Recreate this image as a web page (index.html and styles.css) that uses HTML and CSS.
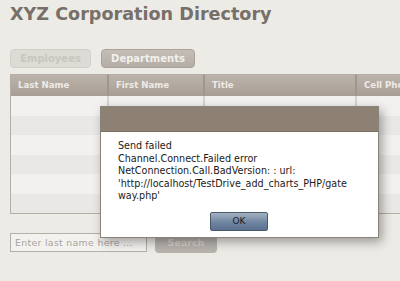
FILE: index.html
```html
<!DOCTYPE html>
<html>
<head>
<meta charset="utf-8">
<link rel="stylesheet" href="styles.css">
</head>
<body>
<div class="page">
  <h1 class="title">XYZ Corporation Directory</h1>
  <div class="tabs">
    <span class="tab tab-off">Employees</span>
    <span class="tab tab-on">Departments</span>
  </div>
  <div class="grid">
    <div class="head">
      <div class="hc c1">Last Name</div>
      <div class="hc c2">First Name</div>
      <div class="hc c3">Title</div>
      <div class="hc c4">Cell Phone</div>
    </div>
    <div class="rows">
      <div class="row"><div class="cell c1"></div><div class="cell c2"></div><div class="cell c3"></div><div class="cell c4"></div></div>
      <div class="row alt"><div class="cell c1"></div><div class="cell c2"></div><div class="cell c3"></div><div class="cell c4"></div></div>
      <div class="row"><div class="cell c1"></div><div class="cell c2"></div><div class="cell c3"></div><div class="cell c4"></div></div>
      <div class="row alt"><div class="cell c1"></div><div class="cell c2"></div><div class="cell c3"></div><div class="cell c4"></div></div>
      <div class="row"><div class="cell c1"></div><div class="cell c2"></div><div class="cell c3"></div><div class="cell c4"></div></div>
      <div class="row alt"><div class="cell c1"></div><div class="cell c2"></div><div class="cell c3"></div><div class="cell c4"></div></div>
    </div>
  </div>
  <div class="search">
    <span class="input">Enter last name here ...</span>
    <span class="sbtn">Search</span>
  </div>
</div>
<div class="dialog">
  <div class="dlg-head"></div>
  <div class="dlg-body">
    <p class="msg">Send failed<br>Channel.Connect.Failed error<br>NetConnection.Call.BadVersion: : url:<br>'http://localhost/TestDrive_add_charts_PHP/gate<br>way.php'</p>
    <div class="actions"><span class="ok">OK</span></div>
  </div>
</div>
</body>
</html>
```
FILE: styles.css
```css
html, body {
  margin: 0;
  padding: 0;
  width: 400px;
  height: 281px;
  overflow: hidden;
  background: #ecebe5;
  font-family: "DejaVu Sans", Verdana, sans-serif;
}
.page {
  padding: 3px 0 0 10px;
}
.title {
  margin: 0;
  font-size: 17.6px;
  line-height: 22px;
  font-weight: bold;
  color: #776f69;
}
.tabs {
  display: flex;
  gap: 10px;
  margin-top: 24px;
}
.tab {
  box-sizing: border-box;
  height: 19px;
  border-radius: 4px;
  font-size: 10px;
  font-weight: bold;
  line-height: 17px;
  text-align: center;
  color: #f2f0ec;
}
.tab-off {
  width: 81px;
  background: #dddbd5;
  border: 1px solid #d3d0ca;
  color: #c9c6c0;
}
.tab-on {
  width: 94px;
  background: linear-gradient(#c4beb7, #b5ada5);
  border: 1px solid #aaa29a;
}
.grid {
  margin-top: 6px;
  width: 420px;
  border: 1px solid #b6aea6;
  border-right: none;
  box-sizing: border-box;
}
.head {
  display: flex;
  height: 21px;
  background: linear-gradient(#bcb3aa, #a89e95);
}
.hc {
  box-sizing: border-box;
  font-size: 8.6px;
  font-weight: bold;
  color: #eeeae6;
  line-height: 21px;
  padding-left: 7px;
  border-right: 2px solid #a0968d;
  white-space: nowrap;
  overflow: hidden;
}
.c1 { width: 98px; }
.c2 { width: 96px; }
.c3 { width: 152px; }
.c4 { flex: 1; border-right: none; }
.rows {
  height: 117px;
  display: flex;
  flex-direction: column;
}
.row {
  display: flex;
  flex: 1;
  background: #f2f1ef;
}
.row.alt {
  background: #e9e8e6;
}
.cell {
  box-sizing: border-box;
  border-right: 2px solid #d6d3cf;
}
.cell.c4 { border-right: none; }
.search {
  display: flex;
  gap: 8px;
  margin-top: 19px;
}
.input {
  box-sizing: border-box;
  width: 137px;
  height: 19px;
  border: 1px solid #b4afa9;
  background: #f3f2ef;
  font-size: 9.4px;
  letter-spacing: 0.3px;
  line-height: 17px;
  padding-left: 4px;
  color: #a8a49f;
  white-space: nowrap;
  overflow: hidden;
}
.sbtn {
  box-sizing: border-box;
  width: 62px;
  height: 20px;
  border-radius: 4px;
  background: #b8b3ad;
  color: #d3d0cb;
  font-size: 9.5px;
  font-weight: bold;
  line-height: 20px;
  text-align: center;
}
.dialog {
  position: absolute;
  left: 100px;
  top: 106px;
  width: 279px;
  height: 132px;
  box-sizing: border-box;
  border: 1px solid #8a837a;
  background: #fff;
  box-shadow: 3px 4px 10px rgba(0,0,0,0.35);
  display: flex;
  flex-direction: column;
}
.dlg-head {
  height: 24px;
  background: #8c8173;
  border-bottom: 1px solid #7a7063;
}
.dlg-body {
  flex: 1;
  padding: 8px 0 0 17px;
}
.msg {
  margin: 0;
  font-size: 9.6px;
  line-height: 12.6px;
  color: #1a1a1a;
}
.actions {
  display: flex;
  justify-content: flex-start;
  padding-left: 92px;
  margin-top: 9px;
}
.ok {
  box-sizing: border-box;
  width: 58px;
  height: 19px;
  border: 1px solid #4a5868;
  border-radius: 2px;
  background: linear-gradient(#a4b2c2, #6f84a0 55%, #5b7190);
  font-size: 9px;
  line-height: 17px;
  text-align: center;
  color: #1c1c1c;
}
```
